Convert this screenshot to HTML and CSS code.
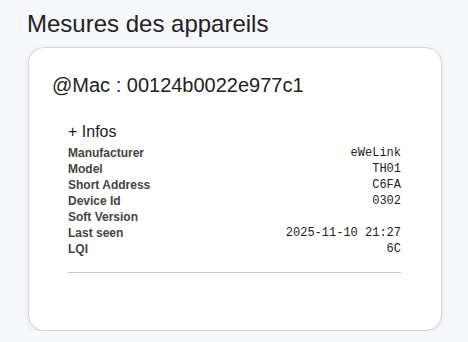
FILE: index.html
```html
<!DOCTYPE html>
<html lang="fr">
<head>
    <meta charset="UTF-8">
    <meta name="viewport" content="width=device-width, initial-scale=1.0">
    <title>Mesures des appareils</title>
    <link rel="stylesheet" href="styles.css">
</head>
<body>

<main class="page">
    <h1>Mesures des appareils</h1>

    <div class="device-card">
        <h2>@Mac : 00124b0022e977c1</h2>

        <div class="infos">
            <div class="infos-title">+ Infos</div>
            <table class="infos-table">
                <tr><th>Manufacturer</th><td>eWeLink</td></tr>
                <tr><th>Model</th><td>TH01</td></tr>
                <tr><th>Short Address</th><td>C6FA</td></tr>
                <tr><th>Device Id</th><td>0302</td></tr>
                <tr><th>Soft Version</th><td></td></tr>
                <tr><th>Last seen</th><td>2025-11-10 21:27</td></tr>
                <tr><th>LQI</th><td>6C</td></tr>
            </table>
            <hr>
        </div>
    </div>
</main>

</body>
</html>
```

FILE: styles.css
```css
body {
    font-family: Arial, "Liberation Sans", sans-serif;
    margin: 0;
    padding: 0;
    background-color: #f6f7fb;
    color: #222;
}

.page {
    padding: 10px 26px 0 28px;
}

h1 {
    margin: 0 0 9px -1px;
    font-size: 24px;
    font-weight: normal;
    line-height: 28px;
}

.device-card {
    background-color: #fff;
    border: 1px solid #d4d4d8;
    border-radius: 16px;
    box-shadow: 0 2px 6px rgba(0, 0, 0, 0.08);
    padding: 25px 24px 57px 23px;
}

.device-card h2 {
    margin: 0 0 26px 0;
    font-size: 20px;
    font-weight: normal;
    line-height: 24px;
}

.infos {
    margin: 0 16px;
}

.infos-title {
    font-size: 16px;
    line-height: 18px;
    margin-bottom: 4px;
}

.infos-table {
    width: 100%;
    border-collapse: collapse;
}

.infos-table th {
    text-align: left;
    font-size: 12px;
    font-weight: bold;
    color: #444;
    padding: 0;
    height: 16px;
    line-height: 16px;
}

.infos-table td {
    text-align: right;
    font-family: "Courier New", "Liberation Mono", monospace;
    font-size: 12px;
    color: #222;
    padding: 0;
    height: 16px;
    line-height: 16px;
}

.infos hr {
    border: none;
    border-top: 1px solid #c8c8c8;
    margin: 15px 0 0 0;
}
```
